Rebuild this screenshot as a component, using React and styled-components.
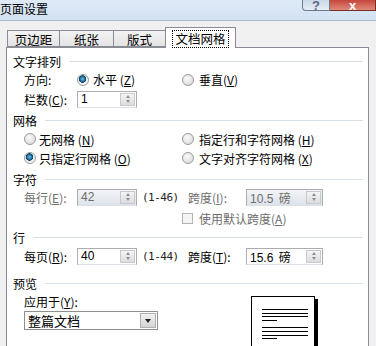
import React from 'react';
import styled, { createGlobalStyle } from 'styled-components';

const GlobalStyle = createGlobalStyle`
  html, body {
    margin: 0;
    padding: 0;
  }
  body {
    background: #f0f0f0;
    font-family: "Noto Sans CJK SC", "Liberation Sans", sans-serif;
    font-size: 12px;
    color: #000;
    overflow: hidden;
  }
`;

const Window = styled.div`
  width: 376px;
  height: 346px;
  overflow: hidden;
  display: flex;
  flex-direction: column;
  background: #f0f0f0;
`;

const TitleBar = styled.div`
  height: 21px;
  flex: none;
  display: flex;
  align-items: flex-start;
  box-sizing: border-box;
  background: linear-gradient(#dfeaf7, #d2e2f3);
  border-bottom: 1px solid #aebfd3;
`;

const Title = styled.div`
  font-size: 12px;
  line-height: 14px;
  margin-top: 2px;
`;

const Caption = styled.div`
  margin-left: auto;
  display: flex;
`;

const CapButton = styled.div`
  width: ${(p) => p.w}px;
  height: 11px;
  box-sizing: border-box;
  display: flex;
  justify-content: center;
  align-items: flex-end;
  overflow: hidden;
  font-family: "Liberation Sans", sans-serif;
  font-weight: bold;
  font-size: 13px;
  line-height: 9px;
  color: ${(p) => (p.close ? '#fff' : '#5b6b80')};
  border: 1px solid ${(p) => (p.close ? '#7a2b22' : '#6b7b90')};
  border-top: none;
  border-left: ${(p) => (p.close ? 'none' : undefined)};
  border-radius: ${(p) => (p.close ? '0' : '0 0 0 4px')};
  background: ${(p) =>
    p.close
      ? 'linear-gradient(#c4463a, #e0897d)'
      : 'linear-gradient(#cbd8e8, #e6eef7)'};
`;

const Body = styled.div`
  flex: 1;
  display: flex;
  flex-direction: column;
  padding-left: 6px;
  padding-top: 6px;
  min-height: 0;
`;

const TabRow = styled.div`
  height: 21px;
  display: flex;
  align-items: flex-end;
  padding-left: 1px;
  position: relative;
  z-index: 1;
`;

const Tab = styled.div`
  width: ${(p) => p.w}px;
  height: ${(p) => (p.active ? 21 : 17)}px;
  box-sizing: border-box;
  margin-right: -1px;
  margin-bottom: ${(p) => (p.active ? -1 : 0)}px;
  display: flex;
  align-items: center;
  justify-content: center;
  border: 1px solid #898c95;
  border-bottom: ${(p) => (p.active ? 'none' : '1px solid #898c95')};
  background: ${(p) =>
    p.active ? '#fff' : 'linear-gradient(#f3f3f3, #e3e3e3)'};
  font-size: 12.5px;
  line-height: 14px;
  padding-top: ${(p) => (p.active ? 1 : 2)}px;
`;

const Focus = styled.span`
  outline: 1px dotted #000;
  outline-offset: 1px;
  padding: 0 1px;
`;

const Panel = styled.div`
  width: 363px;
  flex: 1;
  box-sizing: border-box;
  background: #fff;
  border: 1px solid #898c95;
  border-bottom: none;
  padding: 4px 5px 0 6px;
  display: flex;
  flex-direction: column;
`;

const Heading = styled.div`
  height: 18px;
  flex: none;
  display: flex;
  align-items: center;
  margin-top: ${(p) => p.mt || 0}px;
  &::after {
    content: '';
    flex: 1;
    height: 1px;
    background: #d5dfe5;
    margin-left: 8px;
  }
`;

const Row = styled.div`
  height: ${(p) => p.h}px;
  flex: none;
  display: flex;
  align-items: center;
  padding-left: 11px;
  margin-top: ${(p) => p.mt || 0}px;
  color: ${(p) => (p.disabled ? '#6d6d6d' : '#000')};
`;

const Label = styled.div`
  width: ${(p) => p.w}px;
  flex: none;
  white-space: nowrap;
  color: ${(p) => (p.disabled ? '#6d6d6d' : 'inherit')};
`;

const Option = styled.div`
  width: ${(p) => p.w || 'auto'}px;
  flex: none;
  display: flex;
  align-items: center;
  white-space: nowrap;
  color: ${(p) => (p.disabled ? '#6d6d6d' : '#000')};
`;

const Radio = styled.span`
  width: 12px;
  height: 12px;
  box-sizing: border-box;
  border-radius: 50%;
  border: 1px solid #9a9a9a;
  margin-right: ${(p) => p.gap || 4}px;
  flex: none;
  background: ${(p) =>
    p.checked
      ? 'radial-gradient(circle at 45% 40%, #6fc3e8 0, #1c6a9a 2.5px, #0f3d5a 3.5px, #e9e9e9 4px, #f8f8f8 6px)'
      : 'radial-gradient(circle at 40% 35%, #fafafa 0, #e0e0e0 6px)'};
`;

const Check = styled.span`
  width: 11px;
  height: 11px;
  box-sizing: border-box;
  border: 1px solid #b5b5b5;
  background: #f4f4f4;
  margin-right: 6px;
  flex: none;
`;

const Spin = styled.div`
  width: ${(p) => p.w}px;
  height: 17px;
  flex: none;
  box-sizing: border-box;
  display: flex;
  align-items: center;
  border: 1px solid #abadb3;
  border-bottom-color: #dbdfe6;
  background: ${(p) =>
    p.disabled ? 'linear-gradient(#f2f4f7, #dde3ea)' : '#fff'};
  color: ${(p) => (p.disabled ? '#6d6d6d' : '#000')};
  font-family: "Liberation Sans", "Noto Sans CJK SC", sans-serif;
  font-size: 12px;
`;

const SpinValue = styled.div`
  flex: 1;
  padding-left: 3px;
  white-space: nowrap;
  word-spacing: 2px;
`;

const SpinButtons = styled.div`
  width: 15px;
  height: 13px;
  margin-right: 1px;
  display: flex;
  flex-direction: column;
  border: 1px solid #c6c9cf;
  box-sizing: border-box;
  background: linear-gradient(#f5f5f5, #dcdcdc);
  align-items: center;
  justify-content: space-around;
  padding: 1px 0;
`;

const Arrow = styled.span`
  width: 0;
  height: 0;
  border-left: 2.5px solid transparent;
  border-right: 2.5px solid transparent;
  ${(p) =>
    p.down
      ? 'border-top: 3px solid #8a8f97;'
      : 'border-bottom: 3px solid #8a8f97;'}
`;

const Range = styled.div`
  width: ${(p) => p.w}px;
  flex: none;
  padding-left: 5px;
  color: #222;
  font-family: "DejaVu Sans Mono", "Liberation Mono", monospace;
  font-size: 11px;
  letter-spacing: -0.5px;
`;

const PreviewRow = styled.div`
  display: flex;
  flex: 1;
  min-height: 0;
`;

const ApplyColumn = styled.div`
  width: 238px;
  flex: none;
  padding-left: 11px;
  box-sizing: border-box;
  display: flex;
  flex-direction: column;
`;

const ApplyLabel = styled.div`
  height: 18px;
  display: flex;
  align-items: center;
`;

const Combo = styled.div`
  width: 134px;
  height: 19px;
  margin-top: 1px;
  box-sizing: border-box;
  border: 1px solid #8e8f8f;
  background: #fff;
  display: flex;
  align-items: center;
  font-size: 13px;
`;

const ComboText = styled.div`
  flex: 1;
  padding-left: 3px;
`;

const ComboButton = styled.div`
  width: 16px;
  height: 15px;
  margin-right: 1px;
  box-sizing: border-box;
  border: 1px solid #b0b0b0;
  background: linear-gradient(#f2f2f2, #d4d4d4);
  display: flex;
  align-items: center;
  justify-content: center;
  &::after {
    content: '';
    border-left: 3.5px solid transparent;
    border-right: 3.5px solid transparent;
    border-top: 4px solid #222;
  }
`;

const Page = styled.div`
  width: 64px;
  height: 60px;
  margin-top: 4px;
  box-sizing: border-box;
  border: 1px solid #000;
  box-shadow: 3px 3px 0 #000;
  background: #fff;
`;

const u = (c) => (
  <>
    (<u>{c}</u>)
  </>
);

function SpinBox({ w, value, disabled }) {
  return (
    <Spin w={w} disabled={disabled}>
      <SpinValue>{value}</SpinValue>
      <SpinButtons>
        <Arrow />
        <Arrow down />
      </SpinButtons>
    </Spin>
  );
}

function PageIcon() {
  const lines = [
    [10, 56, 12],
    [10, 56, 16],
    [10, 56, 19],
    [10, 25, 23],
    [10, 56, 30],
    [10, 56, 34],
    [10, 56, 38],
    [10, 25, 41],
  ];
  return (
    <Page>
      <svg width="62" height="58" viewBox="0 0 62 58">
        {lines.map(([x1, x2, y]) => (
          <line key={y} x1={x1} x2={x2} y1={y + 0.5} y2={y + 0.5} stroke="#000" strokeWidth="1" />
        ))}
      </svg>
    </Page>
  );
}

export default function App() {
  return (
    <Window>
      <GlobalStyle />
      <TitleBar>
        <Title>页面设置</Title>
        <Caption>
          <CapButton w={28}>?</CapButton>
          <CapButton w={46} close>x</CapButton>
        </Caption>
      </TitleBar>
      <Body>
        <TabRow>
          <Tab w={53}>页边距</Tab>
          <Tab w={55}>纸张</Tab>
          <Tab w={53}>版式</Tab>
          <Tab w={71} active>
            <Focus>文档网格</Focus>
          </Tab>
        </TabRow>
        <Panel>
          <Heading>文字排列</Heading>
          <Row h={19}>
            <Label w={53}>方向:</Label>
            <Option w={105}>
              <Radio checked />
              水平 {u('Z')}
            </Option>
            <Option>
              <Radio gap={5} />
              垂直{u('V')}
            </Option>
          </Row>
          <Row h={20}>
            <Label w={53}>栏数{u('C')}:</Label>
            <SpinBox w={60} value="1" />
          </Row>

          <Heading mt={2}>网格</Heading>
          <Row h={20}>
            <Option w={158}>
              <Radio gap={3} />
              无网格 {u('N')}
            </Option>
            <Option>
              <Radio gap={5} />
              指定行和字符网格 {u('H')}
            </Option>
          </Row>
          <Row h={18}>
            <Option w={158}>
              <Radio checked gap={3} />
              只指定行网格 {u('O')}
            </Option>
            <Option>
              <Radio gap={5} />
              文字对齐字符网格 {u('X')}
            </Option>
          </Row>

          <Heading mt={3}>字符</Heading>
          <Row h={18} disabled>
            <Label w={53}>每行{u('E')}:</Label>
            <SpinBox w={60} value="42" disabled />
            <Range w={46}>(1-46)</Range>
            <Label w={58}>跨度{u('I')}:</Label>
            <SpinBox w={77} value="10.5 磅" disabled />
          </Row>
          <Row h={20} mt={2}>
            <Option w={158} />
            <Option disabled>
              <Check />
              使用默认跨度{u('A')}
            </Option>
          </Row>

          <Heading>行</Heading>
          <Row h={18} mt={1}>
            <Label w={53}>每页{u('R')}:</Label>
            <SpinBox w={60} value="40" />
            <Range w={46}>(1-44)</Range>
            <Label w={58}>跨度{u('T')}:</Label>
            <SpinBox w={77} value="15.6 磅" />
          </Row>

          <Heading mt={9}>预览</Heading>
          <PreviewRow>
            <ApplyColumn>
              <ApplyLabel>应用于{u('Y')}:</ApplyLabel>
              <Combo>
                <ComboText>整篇文档</ComboText>
                <ComboButton />
              </Combo>
            </ApplyColumn>
            <PageIcon />
          </PreviewRow>
        </Panel>
      </Body>
    </Window>
  );
}
